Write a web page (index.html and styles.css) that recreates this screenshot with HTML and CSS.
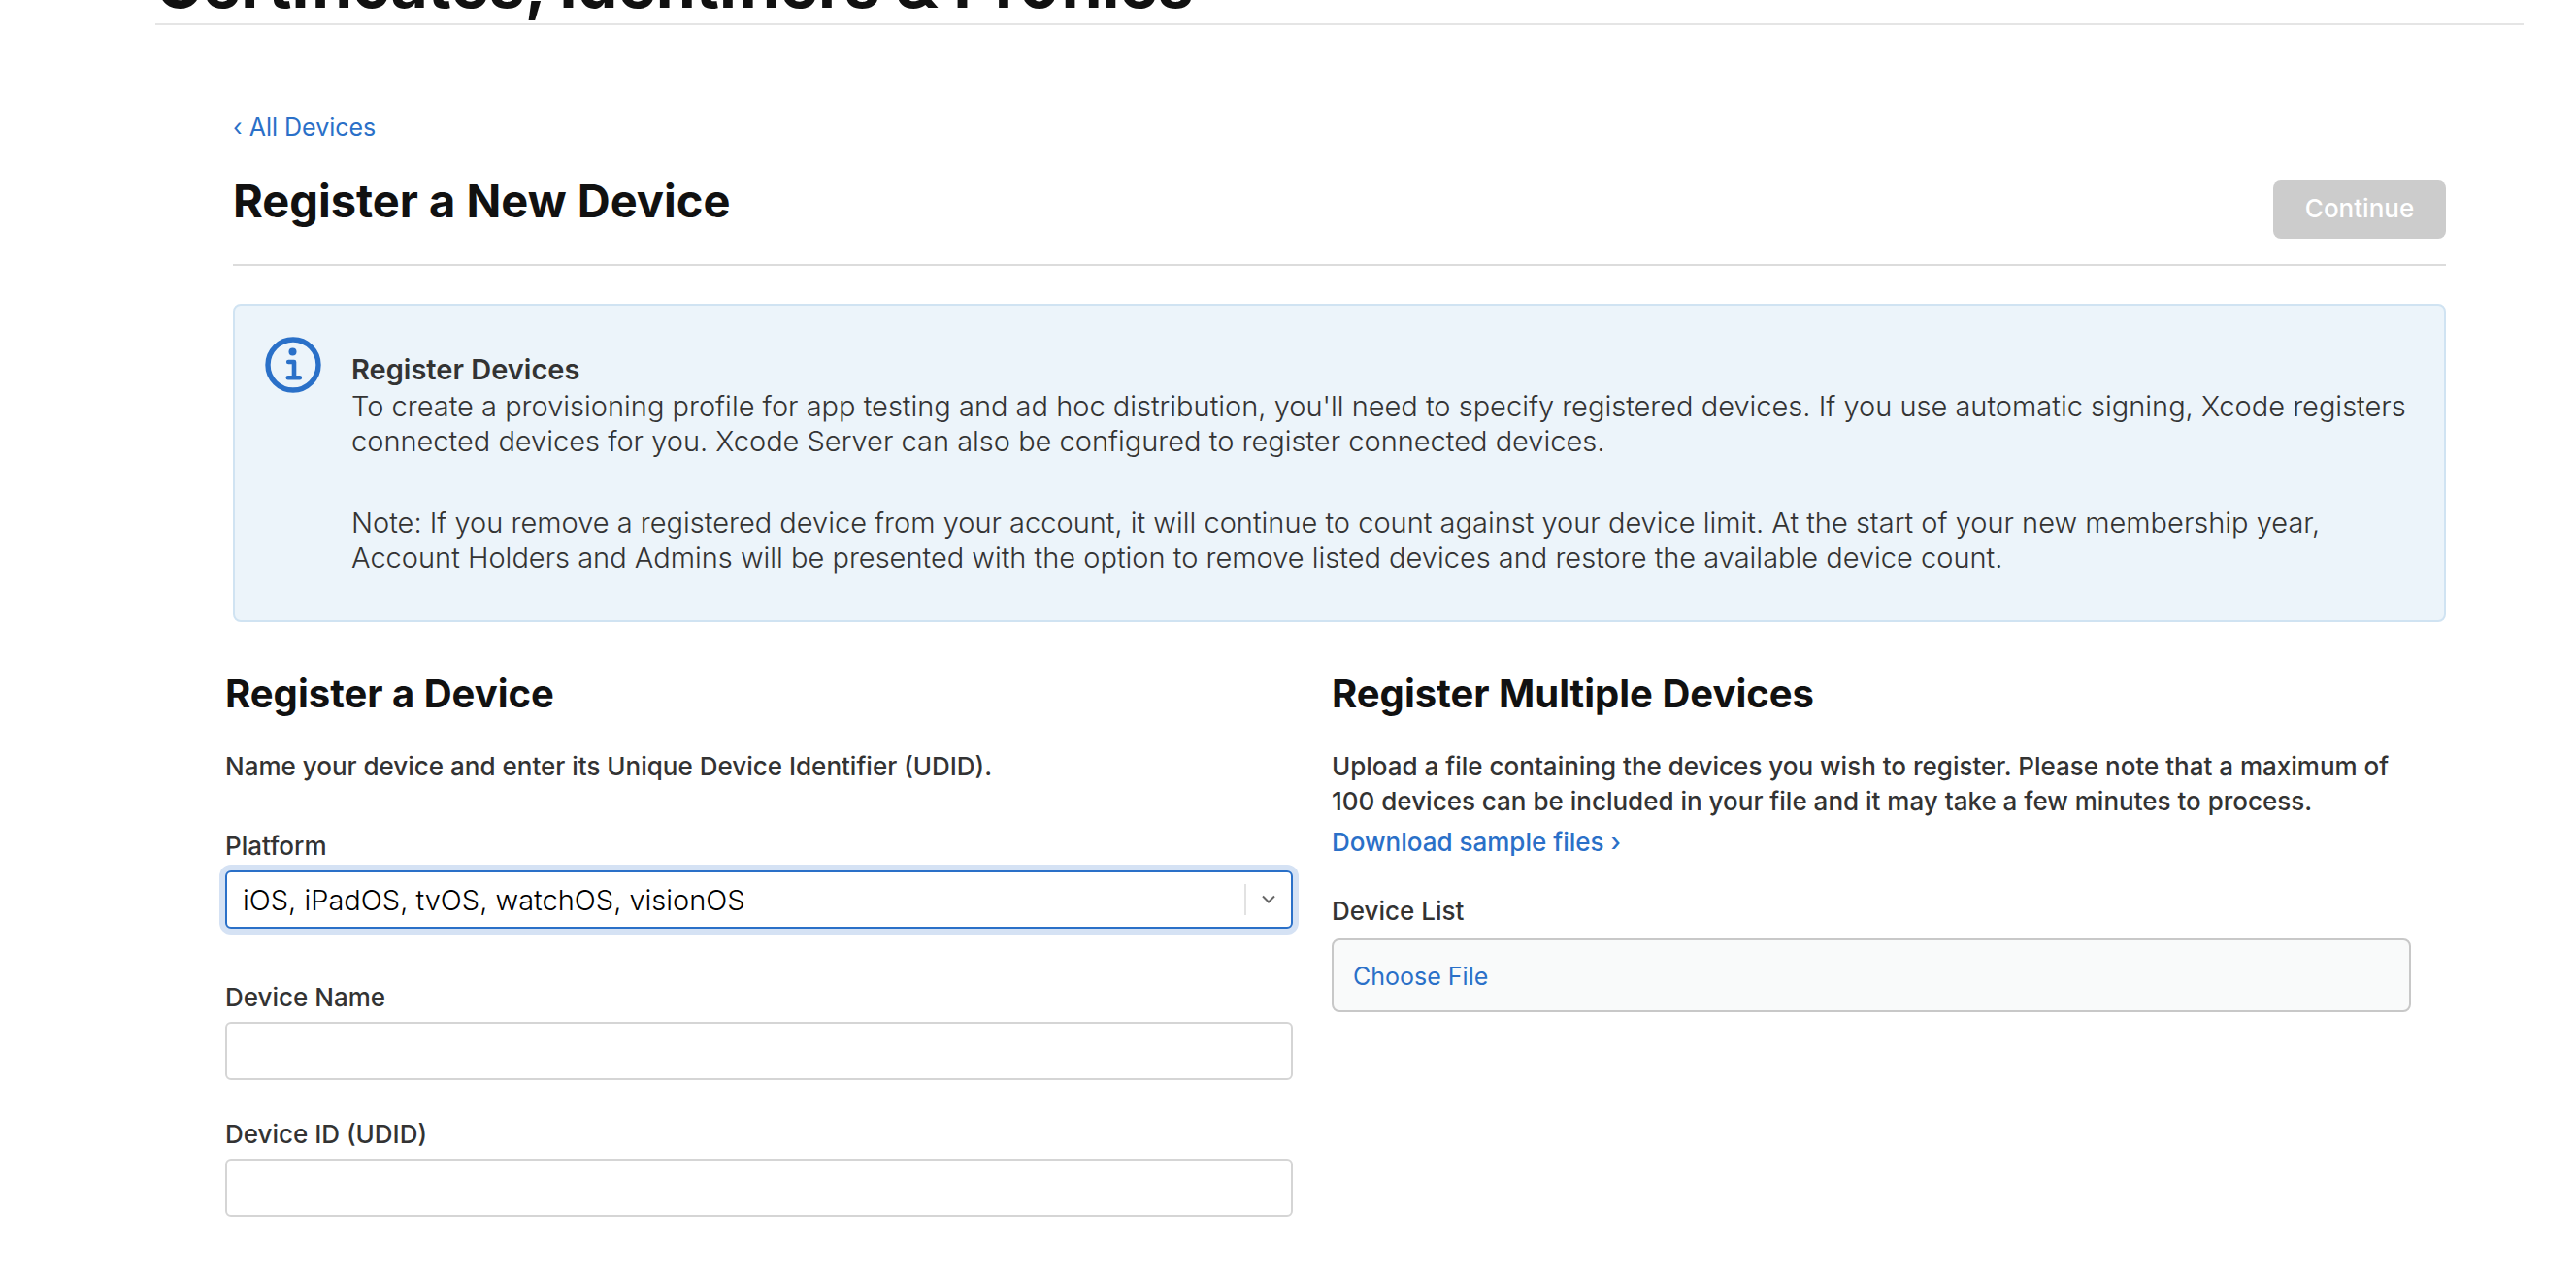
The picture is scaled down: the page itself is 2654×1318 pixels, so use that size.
FILE: index.html
```html
<!DOCTYPE html>
<html lang="en">
<head>
<meta charset="utf-8">
<meta name="viewport" content="width=device-width, initial-scale=1">
<title>Register a New Device</title>
<link rel="stylesheet" href="styles.css">
</head>
<body>
<div class="page">
  <header class="site-header">
    <p class="site-title">Certificates, Identifiers &amp; Profiles</p>
  </header>
  <main class="content">
    <a class="back-link" href="#">‹ All Devices</a>
    <div class="title-bar">
      <h1 class="page-title">Register a New Device</h1>
      <button class="continue" type="button" disabled>Continue</button>
    </div>
    <section class="notice">
      <svg class="notice-icon" viewBox="0 0 58 58" aria-hidden="true">
        <circle cx="29" cy="29" r="26" fill="none" stroke="currentColor" stroke-width="5.4"/>
        <circle cx="28.5" cy="15.6" r="4" fill="currentColor"/>
        <path d="M24.2 26H30V42M23.8 42.2H35.8" fill="none" stroke="currentColor" stroke-width="4.6" stroke-linecap="round" stroke-linejoin="round"/>
      </svg>
      <div class="notice-text">
        <h2 class="notice-title">Register Devices</h2>
        <p>To create a provisioning profile for app testing and ad hoc distribution, you'll need to specify registered devices. If you use automatic signing, Xcode registers connected devices for you. Xcode Server can also be configured to register connected devices.</p>
        <p>Note: If you remove a registered device from your account, it will continue to count against your device limit. At the start of your new membership year, Account Holders and Admins will be presented with the option to remove listed devices and restore the available device count.</p>
      </div>
    </section>
    <div class="columns">
      <section class="single">
        <h2 class="section-title">Register a Device</h2>
        <p class="intro">Name your device and enter its Unique Device Identifier (UDID).</p>
        <div class="field field-platform">
          <label for="platform">Platform</label>
          <div class="select-wrap">
            <select id="platform" class="control select">
              <option>iOS, iPadOS, tvOS, watchOS, visionOS</option>
              <option>macOS</option>
            </select>
            <span class="indicator">
              <svg width="14" height="10" viewBox="0 0 14 10" aria-hidden="true"><path d="M1 1.5L7 7.5L13 1.5" fill="none" stroke="#666" stroke-width="2"/></svg>
            </span>
          </div>
        </div>
        <div class="field">
          <label for="name">Device Name</label>
          <input id="name" class="control" type="text">
        </div>
        <div class="field">
          <label for="udid">Device ID (UDID)</label>
          <input id="udid" class="control" type="text">
        </div>
      </section>
      <section class="multiple">
        <h2 class="section-title">Register Multiple Devices</h2>
        <p class="intro">Upload a file containing the devices you wish to register. Please note that a maximum of 100 devices can be included in your file and it may take a few minutes to process.</p>
        <a class="sample-link" href="#">Download sample files ›</a>
        <label class="list-label" for="device-list">Device List</label>
        <div class="file-box">
          <button class="choose" id="device-list" type="button">Choose File</button>
        </div>
      </section>
    </div>
  </main>
</div>
</body>
</html>
```

FILE: styles.css
```css
* {
  box-sizing: border-box;
}

body {
  margin: 0;
  background: #fff;
  color: #333;
  font-family: Inter, "Liberation Sans", sans-serif;
  font-size: 26px;
  line-height: 36px;
}

h1, h2, p {
  margin: 0;
}

a {
  color: #2a70c8;
  text-decoration: none;
}

button, input, select {
  font-family: inherit;
}

.page {
  margin: 0 54px 0 160px;
}

.site-header {
  display: flex;
  align-items: flex-end;
  height: 26px;
  overflow: hidden;
  border-bottom: 2px solid #e5e5e5;
}

.site-title {
  color: #111;
  font-size: 66px;
  font-weight: 700;
  line-height: 80px;
  white-space: nowrap;
}

.content {
  padding: 87px 80px 64px;
}

.back-link {
  display: block;
  font-size: 25px;
}

.title-bar {
  display: flex;
  align-items: flex-start;
  justify-content: space-between;
  padding-bottom: 26px;
  margin-top: 28px;
  border-bottom: 2px solid #dcdcdc;
}

.page-title {
  color: #111;
  font-size: 47px;
  font-weight: 700;
  line-height: 60px;
}

.continue {
  width: 178px;
  height: 60px;
  margin-top: 9px;
  padding: 0 0 4px;
  border: 0;
  border-radius: 8px;
  background: #ccc;
  color: #fff;
  font-size: 26px;
  font-weight: 500;
}

.notice {
  display: flex;
  gap: 31px;
  margin-top: 39px;
  padding: 32px 30px 46px 31px;
  border: 2px solid #d0e3f2;
  border-radius: 8px;
  background: #ecf4fa;
}

.notice-icon {
  flex: none;
  width: 58px;
  height: 58px;
  color: #2a70c8;
}

.notice-text {
  display: flex;
  flex-direction: column;
  padding-top: 16px;
  font-size: 29px;
  font-weight: 300;
}

.notice-title {
  margin-bottom: 2px;
  font-size: 29px;
  font-weight: 600;
  line-height: 36px;
}

.notice-text p + p {
  margin-top: 48px;
}

.columns {
  display: grid;
  grid-template-columns: 1fr 1fr;
  margin: 50px 8px 0 -8px;
}

.single {
  padding-right: 40px;
}

.multiple {
  padding-right: 28px;
}

.section-title {
  color: #111;
  font-size: 40px;
  font-weight: 700;
  line-height: 48px;
}

.intro {
  margin-top: 33px;
  font-weight: 500;
}

.field {
  display: flex;
  flex-direction: column;
  margin-top: 36px;
  gap: 5px;
}

.field label, .list-label {
  line-height: 40px;
  font-weight: 500;
}

.field-platform {
  margin: 44px 0 51px;
}

.control {
  width: 100%;
  height: 60px;
  padding: 0 16px;
  border: 2px solid #d5d5d5;
  border-radius: 6px;
  background: #fff;
  color: #000;
  font-size: 29px;
}

.select-wrap {
  position: relative;
}

.select {
  display: block;
  appearance: none;
  border-color: #2a70c8;
  box-shadow: 0 0 0 6px #d5e2f4;
  font-weight: 300;
}

.indicator {
  position: absolute;
  top: 14px;
  right: 0;
  display: flex;
  align-items: center;
  width: 50px;
  height: 32px;
  padding-left: 16px;
  border-left: 2px solid #e2e2e2;
  pointer-events: none;
}

.sample-link {
  display: block;
  margin-top: 6px;
  font-weight: 500;
}

.list-label {
  display: block;
  margin-top: 33px;
}

.file-box {
  display: flex;
  align-items: center;
  height: 76px;
  margin-top: 8px;
  padding: 2px 20px 0;
  border: 2px solid #c8c8c8;
  border-radius: 8px;
  background: #f9fafa;
}

.choose {
  padding: 0;
  border: 0;
  background: none;
  color: #2a70c8;
  font-size: 25px;
}
```
